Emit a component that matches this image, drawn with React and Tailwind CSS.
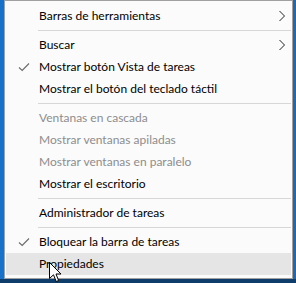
const items = [
  { label: "Barras de herramientas", arrow: true },
  { sep: true },
  { label: "Buscar", arrow: true },
  { label: "Mostrar botón Vista de tareas", checked: true },
  { label: "Mostrar el botón del teclado táctil" },
  { sep: true },
  { label: "Ventanas en cascada", disabled: true },
  { label: "Mostrar ventanas apiladas", disabled: true },
  { label: "Mostrar ventanas en paralelo", disabled: true },
  { label: "Mostrar el escritorio" },
  { sep: true },
  { label: "Administrador de tareas" },
  { sep: true },
  { label: "Bloquear la barra de tareas", checked: true },
  { label: "Propiedades", hover: true },
];

const Check = () => (
  <svg width="12" height="10" viewBox="0 0 12 10" className="ml-[12px]">
    <path d="M1 5.5 L4.2 8.5 L11 1.5" fill="none" stroke="#6a6a6a" strokeWidth="1.1" />
  </svg>
);

const Chevron = () => (
  <svg width="8" height="12" viewBox="0 0 8 12" className="ml-auto mr-[5px]">
    <path d="M1.5 1 L6.5 6 L1.5 11" fill="none" stroke="#222" strokeWidth="1" />
  </svg>
);

const Cursor = () => (
  <svg
    width="13"
    height="21"
    viewBox="0 0 13 21"
    className="absolute left-[49px] top-[262px]"
  >
    <path
      d="M0.5 0.5 L0.5 16.5 L4.5 12.8 L7.2 19.5 L9.6 18.5 L7 12 L12 12 Z"
      fill="#fff"
      stroke="#000"
      strokeWidth="1"
    />
  </svg>
);

export default function App() {
  return (
    <div className="relative w-[296px] h-[283px] flex flex-col bg-[#1b70c6] overflow-hidden font-['Lato',sans-serif]">
      <div className="flex h-[279px]">
        <div className="w-[4px] bg-[#1a72c8]" />
        <div className="w-[289px] border border-[#a0a0a0] bg-[#fbfbfb] pt-[4px] pl-[1px] pr-[1px] flex flex-col">
          {items.map((it, i) =>
            it.sep ? (
              <div key={i} className="h-[7px] flex items-center pl-[32px]">
                <div className="h-px w-full bg-[#d7d7d7]" />
              </div>
            ) : (
              <div
                key={i}
                className={`h-[22px] flex items-center text-[12px] ${
                  it.hover ? "bg-[#e5e5e5]" : ""
                } ${it.disabled ? "text-[#8d8d8d]" : "text-black"}`}
              >
                <div className="w-[33px] flex items-center">
                  {it.checked && <Check />}
                </div>
                <span className="leading-none">{it.label}</span>
                {it.arrow && <Chevron />}
              </div>
            )
          )}
        </div>
        <div className="flex-1 bg-[#1a6ab9]" />
      </div>
      <div className="flex-1 bg-[#0e3d6b]" />
      <Cursor />
    </div>
  );
}
